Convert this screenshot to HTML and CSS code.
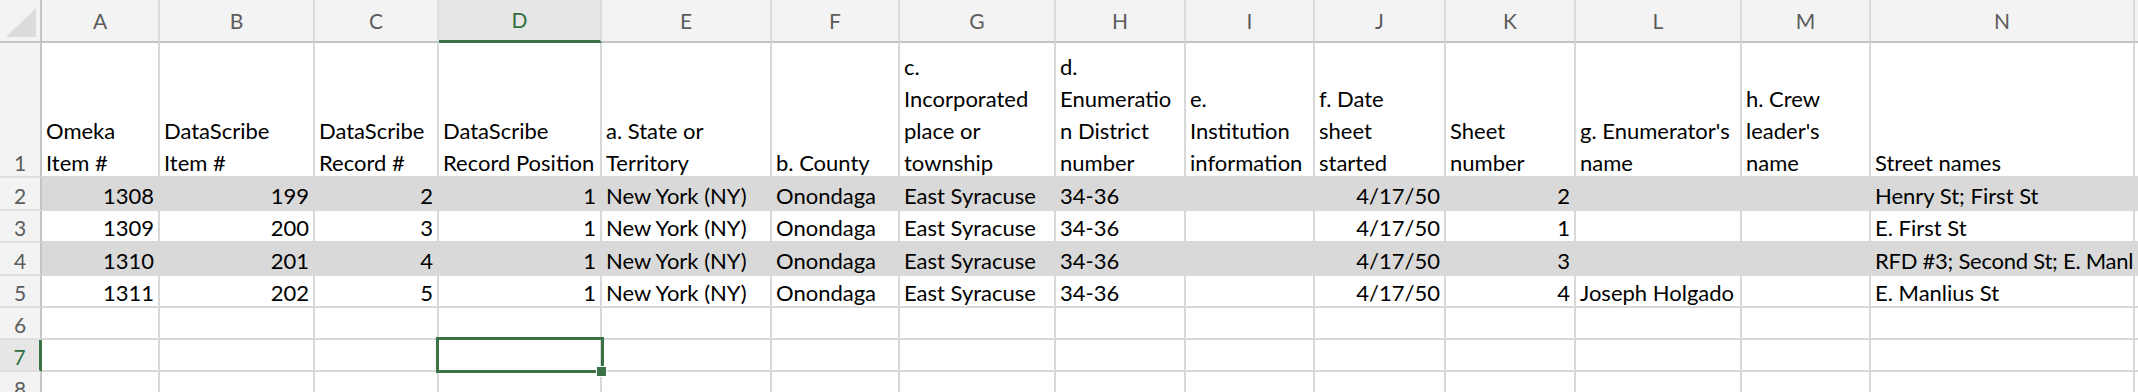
FILE: index.html
```html
<!DOCTYPE html>
<html>
<head>
<meta charset="utf-8">
<link rel="stylesheet" href="styles.css">
</head>
<body>
<div class="sheet">
  <!-- column header row -->
  <div class="c corner"><svg class="tri" width="42" height="43" viewBox="0 0 42 43"><polygon points="36,8 36,37 6,37" fill="#dcdcdc"/></svg></div>
  <div class="c col">A</div>
  <div class="c col">B</div>
  <div class="c col">C</div>
  <div class="c col sel">D</div>
  <div class="c col">E</div>
  <div class="c col">F</div>
  <div class="c col">G</div>
  <div class="c col">H</div>
  <div class="c col">I</div>
  <div class="c col">J</div>
  <div class="c col">K</div>
  <div class="c col">L</div>
  <div class="c col">M</div>
  <div class="c col">N</div>
  <div class="c col"></div>

  <!-- row 1 -->
  <div class="c rh tall"><span>1</span></div>
  <div class="c tall"><span>Omeka<br>Item #</span></div>
  <div class="c tall"><span>DataScribe<br>Item #</span></div>
  <div class="c tall"><span>DataScribe<br>Record #</span></div>
  <div class="c tall"><span>DataScribe<br>Record Position</span></div>
  <div class="c tall"><span>a. State or<br>Territory</span></div>
  <div class="c tall"><span>b. County</span></div>
  <div class="c tall"><span>c.<br>Incorporated<br>place or<br>township</span></div>
  <div class="c tall"><span>d.<br>Enumeratio<br>n District<br>number</span></div>
  <div class="c tall"><span>e.<br>Institution<br>information</span></div>
  <div class="c tall"><span>f. Date<br>sheet<br>started</span></div>
  <div class="c tall"><span>Sheet<br>number</span></div>
  <div class="c tall"><span>g. Enumerator's<br>name</span></div>
  <div class="c tall"><span>h. Crew<br>leader's<br>name</span></div>
  <div class="c tall"><span>Street names</span></div>
  <div class="c tall"></div>

  <!-- row 2 -->
  <div class="c rh">2</div>
  <div class="c fill num">1308</div>
  <div class="c fill num">199</div>
  <div class="c fill num">2</div>
  <div class="c fill num">1</div>
  <div class="c fill">New York (NY)</div>
  <div class="c fill">Onondaga</div>
  <div class="c fill">East Syracuse</div>
  <div class="c fill">34-36</div>
  <div class="c fill"></div>
  <div class="c fill num">4/17/50</div>
  <div class="c fill num">2</div>
  <div class="c fill"></div>
  <div class="c fill"></div>
  <div class="c fill">Henry St; First St</div>
  <div class="c fill"></div>

  <!-- row 3 -->
  <div class="c rh">3</div>
  <div class="c num">1309</div>
  <div class="c num">200</div>
  <div class="c num">3</div>
  <div class="c num">1</div>
  <div class="c">New York (NY)</div>
  <div class="c">Onondaga</div>
  <div class="c">East Syracuse</div>
  <div class="c">34-36</div>
  <div class="c"></div>
  <div class="c num">4/17/50</div>
  <div class="c num">1</div>
  <div class="c"></div>
  <div class="c"></div>
  <div class="c">E. First St</div>
  <div class="c"></div>

  <!-- row 4 -->
  <div class="c rh">4</div>
  <div class="c fill num">1310</div>
  <div class="c fill num">201</div>
  <div class="c fill num">4</div>
  <div class="c fill num">1</div>
  <div class="c fill">New York (NY)</div>
  <div class="c fill">Onondaga</div>
  <div class="c fill">East Syracuse</div>
  <div class="c fill">34-36</div>
  <div class="c fill"></div>
  <div class="c fill num">4/17/50</div>
  <div class="c fill num">3</div>
  <div class="c fill"></div>
  <div class="c fill"></div>
  <div class="c fill tight">RFD #3; Second St; E. Manlius St</div>
  <div class="c fill"></div>

  <!-- row 5 -->
  <div class="c rh">5</div>
  <div class="c num">1311</div>
  <div class="c num">202</div>
  <div class="c num">5</div>
  <div class="c num">1</div>
  <div class="c">New York (NY)</div>
  <div class="c">Onondaga</div>
  <div class="c">East Syracuse</div>
  <div class="c">34-36</div>
  <div class="c"></div>
  <div class="c num">4/17/50</div>
  <div class="c num">4</div>
  <div class="c">Joseph Holgado</div>
  <div class="c"></div>
  <div class="c">E. Manlius St</div>
  <div class="c"></div>

  <!-- row 6 -->
  <div class="c rh">6</div>
  <div class="c"></div><div class="c"></div><div class="c"></div><div class="c"></div>
  <div class="c"></div><div class="c"></div><div class="c"></div><div class="c"></div>
  <div class="c"></div><div class="c"></div><div class="c"></div><div class="c"></div>
  <div class="c"></div><div class="c"></div><div class="c"></div>

  <!-- row 7 -->
  <div class="c rh rsel">7</div>
  <div class="c"></div><div class="c"></div><div class="c"></div>
  <div class="c active"><div class="selbox"><div class="handle"></div></div></div>
  <div class="c"></div><div class="c"></div><div class="c"></div><div class="c"></div>
  <div class="c"></div><div class="c"></div><div class="c"></div><div class="c"></div>
  <div class="c"></div><div class="c"></div><div class="c"></div>

  <!-- row 8 -->
  <div class="c rh">8</div>
  <div class="c"></div><div class="c"></div><div class="c"></div><div class="c"></div>
  <div class="c"></div><div class="c"></div><div class="c"></div><div class="c"></div>
  <div class="c"></div><div class="c"></div><div class="c"></div><div class="c"></div>
  <div class="c"></div><div class="c"></div><div class="c"></div>
</div>
</body>
</html>
```

FILE: styles.css
```css
html, body {
  margin: 0;
  padding: 0;
  background: #ffffff;
  overflow: hidden;
}

.sheet {
  display: grid;
  grid-template-columns: 42px 118px 155px 124px 163px 170px 128px 156px 130px 129px 131px 130px 166px 129px 264px 1fr;
  grid-template-rows: 43px 135px 33px 32px 33px 32px 32px 32px 32px;
  width: 2138px;
  font-family: Lato, "Liberation Sans", sans-serif;
  font-size: 22px;
  color: #000000;
}

.c {
  box-sizing: border-box;
  border-right: 2px solid #d8d8d8;
  border-bottom: 2px solid #d8d8d8;
  padding: 0 4px;
  display: flex;
  align-items: flex-end;
  justify-content: flex-start;
  overflow: hidden;
  white-space: nowrap;
  line-height: 26px;
  min-width: 0;
}

.num {
  justify-content: flex-end;
}

.fill {
  background: #d9d9d9;
  border-color: #d9d9d9;
}

.tight {
  letter-spacing: -0.25px;
}

.tall span {
  line-height: 32px;
  margin-bottom: -3px;
}

/* column headers */
.col {
  background: #f3f3f3;
  border-right-color: #dcdcdc;
  border-bottom: 2px solid #c4c4c4;
  justify-content: center;
  align-items: center;
  color: #5c5c5c;
  font-size: 21px;
  padding: 0;
}

.col.sel {
  background: #e6e6e6;
  color: #2f6f41;
  border-bottom: 3px solid #3a7246;
}

.corner {
  background: #f3f3f3;
  border-right: 2px solid #c4c4c4;
  border-bottom: 2px solid #c4c4c4;
  padding: 0;
  position: relative;
}

.tri {
  position: absolute;
  left: 0;
  top: 0;
}

/* row headers */
.rh {
  background: #f3f3f3;
  border-right: 2px solid #c4c4c4;
  border-bottom-color: #dedede;
  justify-content: center;
  color: #5c5c5c;
  font-size: 21px;
  padding: 0;
}

.rh.rsel {
  background: #e6e6e6;
  color: #2f6f41;
  border-right: 3px solid #3a7246;
}

/* active cell */
.active {
  position: relative;
  overflow: visible;
}

.selbox {
  position: absolute;
  left: -3px;
  top: -3px;
  width: 168px;
  height: 36px;
  box-sizing: border-box;
  border: 3px solid #3a7246;
  z-index: 2;
}

.handle {
  position: absolute;
  right: -5px;
  bottom: -6px;
  width: 9px;
  height: 9px;
  background: #3a7246;
  box-shadow: 0 0 0 1px #ffffff;
}
```
